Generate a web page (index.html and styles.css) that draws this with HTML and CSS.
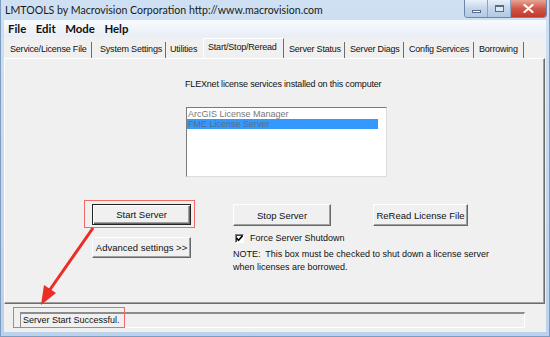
FILE: index.html
```html
<!DOCTYPE html>
<html>
<head>
<meta charset="utf-8">
<link rel="stylesheet" href="styles.css">
</head>
<body>
<div class="window">
  <div class="titlebar">
    <span class="title">LMTOOLS by Macrovision Corporation http://www.macrovision.com</span>
    <div class="winbtns">
      <span class="wb wb-min"><span class="min-glyph"></span></span>
      <span class="wb wb-max"><span class="max-glyph"></span></span>
      <span class="wb wb-close"><svg width="11" height="9" viewBox="0 0 11 9"><path d="M1.5 1 L9.5 8 M9.5 1 L1.5 8" stroke="#fff" stroke-width="2.2" stroke-linecap="round"/></svg></span>
    </div>
  </div>
  <div class="client">
    <div class="menubar">
      <span class="menu">File</span>
      <span class="menu">Edit</span>
      <span class="menu">Mode</span>
      <span class="menu">Help</span>
    </div>
    <div class="tabstrip">
      <span class="tab tab-1">Service/License File</span>
      <span class="tab tab-2">System Settings</span>
      <span class="tab tab-3">Utilities</span>
      <span class="tab tab-active">Start/Stop/Reread</span>
      <span class="tab tab-5">Server Status</span>
      <span class="tab tab-6">Server Diags</span>
      <span class="tab tab-7">Config Services</span>
      <span class="tab tab-8">Borrowing</span>
    </div>
    <div class="panel">
      <div class="label">FLEXnet license services installed on this computer</div>
      <div class="listbox">
        <div class="item">ArcGIS License Manager</div>
        <div class="item item-sel">FME License Server</div>
      </div>
      <div class="controls">
        <div class="col-left">
          <div class="btn btn-default">Start Server</div>
          <div class="btn btn-adv">Advanced settings &gt;&gt;</div>
        </div>
        <div class="col-rest">
          <div class="btn btn-stop">Stop Server</div>
          <div class="btn btn-reread">ReRead License File</div>
          <div class="check-row">
            <span class="checkbox"><svg width="7" height="7" viewBox="0 0 7 7"><path d="M0.5 3 L2.5 5.2 L6.5 0.8" stroke="#000" stroke-width="1.6" fill="none"/></svg></span>
            <span>Force Server Shutdown</span>
          </div>
          <div class="note">NOTE:&nbsp; This box must be checked to shut down a license server<br>when licenses are borrowed.</div>
        </div>
      </div>
    </div>
    <div class="statusbar">
      <div class="status-field">Server Start Successful.</div>
    </div>
  </div>
</div>
<div class="redbox redbox-start"></div>
<div class="redbox redbox-status"></div>
<svg class="arrow" width="550" height="337" viewBox="0 0 550 337">
  <line x1="93" y1="228" x2="49" y2="291" stroke="#ec2c25" stroke-width="3"/>
  <polygon points="41,305 44,285 56,293" fill="#ec2c25"/>
</svg>
</body>
</html>
```

FILE: styles.css
```css
* { box-sizing: border-box; }
html, body { margin: 0; padding: 0; }
body {
  width: 550px;
  height: 337px;
  overflow: hidden;
  position: relative;
  font-family: "Liberation Sans", Arial, sans-serif;
  background: linear-gradient(#cfe0f3, #bcd2ec);
}
.window {
  width: 550px;
  height: 337px;
  display: flex;
  flex-direction: column;
  border: 1px solid #7e9cc0;
  border-top: none;
}
.titlebar {
  height: 20px;
  display: flex;
  align-items: flex-start;
  justify-content: space-between;
  padding-left: 4px;
}
.title {
  font-family: "Lato", sans-serif;
  font-size: 10.6px;
  color: #1a1a1a;
  line-height: 14px;
  margin-top: 3px;
}
.winbtns {
  display: flex;
  margin-right: 2px;
  border: 1px solid #6a86ab;
  border-top: none;
  border-radius: 0 0 4px 4px;
  overflow: hidden;
  height: 18px;
}
.wb {
  height: 17px;
  display: flex;
  align-items: center;
  justify-content: center;
}
.wb-min, .wb-max {
  width: 23px;
  background: linear-gradient(#e9f1fa, #c3d5ea 50%, #b3c9e3);
  border-right: 1px solid #8aa4c4;
}
.min-glyph {
  width: 9px; height: 3px;
  background: #fff;
  border: 1px solid #586c88;
  margin-top: 6px;
}
.max-glyph {
  width: 9px; height: 7px;
  border: 1px solid #586c88;
  border-top-width: 2px;
  background: #dfe9f5;
}
.wb-close {
  width: 35px;
  background: linear-gradient(#e8a493, #d0584a 50%, #c3382b);
}
.client {
  flex: 1;
  margin: 0 3px 4px 3px;
  background: #f0f0f0;
  display: flex;
  flex-direction: column;
}
.menubar {
  height: 17px;
  display: flex;
  align-items: center;
  padding-left: 4px;
  background: linear-gradient(#f7fafd, #e9eef6);
  font-family: "Lato", sans-serif;
  font-size: 11.4px;
  font-weight: 700;
  color: #111;
}
.menu { margin-right: 9.5px; }
.tabstrip {
  height: 21px;
  display: flex;
  align-items: flex-end;
  padding-left: 3px;
  font-size: 9px;
  letter-spacing: -0.2px;
  color: #111;
}
.tab {
  height: 16px;
  line-height: 14px;
  padding-left: 5px;
  border-right: 1px solid #6d6d6d;
  white-space: nowrap;
  overflow: hidden;
}
.tab-1 { width: 85px; padding-left: 3px; }
.tab-2 { width: 74px; padding-left: 8px; }
.tab-3 { width: 37px; padding-left: 4px; border-right-color: transparent; }
.tab-active {
  width: 81px;
  height: 20px;
  line-height: 12px;
  padding: 2px 0 0 4px;
  border-left: 1px solid #fff;
  border-top: 1px solid #fff;
}
.tab-5 { width: 61px; }
.tab-6 { width: 59px; }
.tab-7 { width: 70px; }
.tab-8 { width: 50px; }
.panel {
  height: 246px;
  border-top: 1px solid #fff;
  border-left: 1px solid #fff;
  border-right: 1px solid #6d6d6d;
  border-bottom: 1px solid #6d6d6d;
  box-shadow: inset -1px -1px 0 #a0a0a0;
  margin-right: 1px;
  position: relative;
  font-size: 9px;
  color: #111;
}
.label {
  margin: 20px 0 0 180px;
  line-height: 11px;
  letter-spacing: -0.18px;
}
.listbox {
  margin: 17px 0 0 181px;
  width: 201px;
  height: 70px;
  background: #fff;
  border-top: 1px solid #7a7a7a;
  border-left: 1px solid #7a7a7a;
  border-right: 1px solid #dcdcdc;
  border-bottom: 1px solid #dcdcdc;
  padding: 1px 8px 0 0;
}
.item {
  height: 10px;
  line-height: 10px;
  padding-left: 1px;
  font-size: 9px;
  color: #777;
  white-space: nowrap;
}
.item-sel {
  background: #3399ff;
  color: #5a6d88;
}
.controls {
  display: flex;
  margin: 27px 0 0 87px;
  gap: 42px;
}
.col-left {
  display: flex;
  flex-direction: column;
  gap: 12px;
}
.btn {
  height: 22px;
  display: flex;
  align-items: center;
  justify-content: center;
  background: #f0f0f0;
  border-top: 1px solid #fff;
  border-left: 1px solid #fff;
  border-right: 1px solid #696969;
  border-bottom: 1px solid #696969;
  box-shadow: inset -1px -1px 0 #a0a0a0;
  font-size: 9.5px;
  color: #111;
  white-space: nowrap;
}
.btn-default {
  width: 99px;
  height: 21px;
  border: 1px solid #222;
  box-shadow: inset 1px 1px 0 #fff, inset -1px -1px 0 #696969, inset -2px -2px 0 #a0a0a0;
}
.btn-adv { width: 99px; height: 21px; }
.col-rest {
  display: grid;
  grid-template-columns: 98px 95px;
  column-gap: 42px;
  align-content: start;
}
.btn-stop { width: 98px; }
.btn-reread { width: 95px; }
.check-row {
  grid-column: 1 / 3;
  display: flex;
  align-items: center;
  gap: 6px;
  margin: 7px 0 0 2px;
  height: 10px;
}
.checkbox {
  width: 9px;
  height: 9px;
  background: #fff;
  border-top: 1px solid #808080;
  border-left: 1px solid #808080;
  border-right: 1px solid #fff;
  border-bottom: 1px solid #fff;
  box-shadow: inset 1px 1px 0 #404040;
  display: flex;
  align-items: center;
  justify-content: center;
}
.note {
  grid-column: 1 / 3;
  margin-top: 5px;
  line-height: 13px;
  white-space: nowrap;
}
.statusbar {
  flex: 1;
  padding: 8px 0 0 16px;
}
.status-field {
  width: 505px;
  height: 16px;
  border-top: 2px solid #8c8c8c;
  border-left: 1px solid #8c8c8c;
  border-right: 1px solid #fff;
  border-bottom: 1px solid #fff;
  font-size: 9px;
  line-height: 12px;
  padding-left: 2px;
  color: #111;
}
.redbox {
  position: absolute;
  border: 1px solid #f06a6a;
}
.redbox-start { left: 84px; top: 200px; width: 111px; height: 28px; }
.redbox-status { left: 13px; top: 307px; width: 112px; height: 21px; }
.arrow { position: absolute; left: 0; top: 0; pointer-events: none; }
```
